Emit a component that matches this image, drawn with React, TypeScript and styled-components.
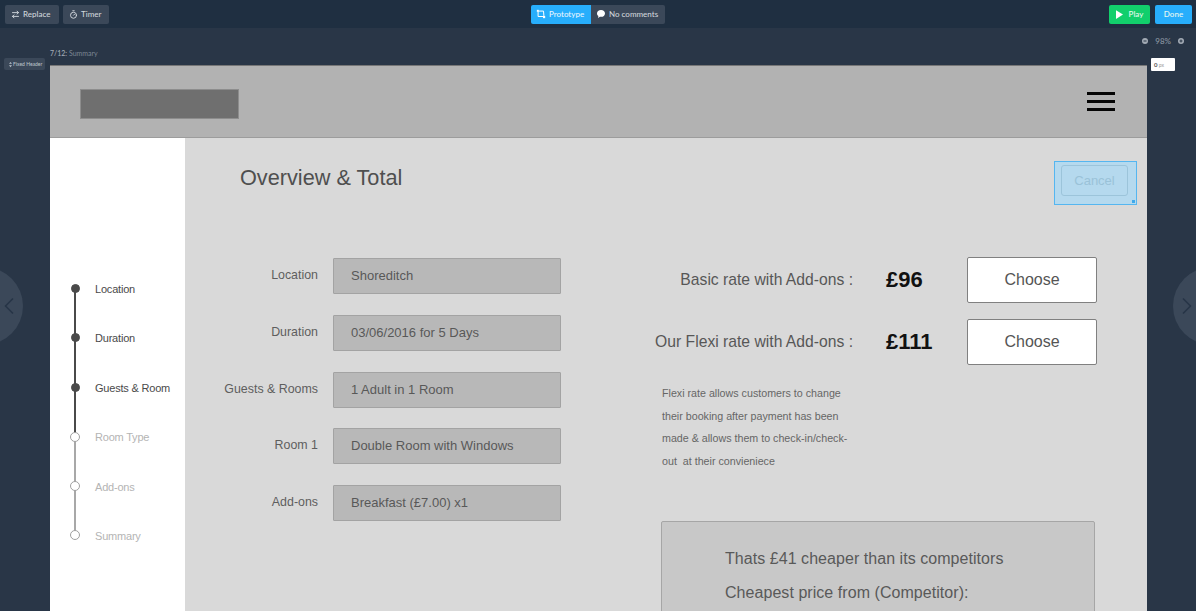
import React from 'react';
import styled, { createGlobalStyle } from 'styled-components';
import { ArrowRightLeft, ChevronLeft, ChevronRight, Timer } from 'lucide-react';

const GlobalStyle = createGlobalStyle`
  html, body {
    margin: 0;
    padding: 0;
    height: 100%;
    overflow: hidden;
    background: #293647;
  }
  * { box-sizing: border-box; }
`;

const Page = styled.div`
  position: relative;
  width: 1196px;
  height: 611px;
  overflow: hidden;
  display: flex;
  flex-direction: column;
  font-family: 'Lato', 'Liberation Sans', sans-serif;
`;

const TopBar = styled.header`
  height: 28px;
  flex: none;
  display: grid;
  grid-template-columns: 1fr auto 1fr;
  align-items: center;
  padding: 0 4px;
  background: #1f2f41;
`;

const BarGroup = styled.div<{ $end?: boolean }>`
  display: flex;
  gap: ${p => (p.$end ? 5 : 4)}px;
  padding-left: ${p => (p.$end ? 0 : 1)}px;
  justify-content: ${p => (p.$end ? 'flex-end' : 'flex-start')};
`;

const ToolButton = styled.button<{ $w: number }>`
  width: ${p => p.$w}px;
  height: 19px;
  display: flex;
  align-items: center;
  gap: 3px;
  padding: 0 0 0 6px;
  border: 0;
  border-radius: 2px;
  background: #3b4859;
  color: #cfd4da;
  font: 500 8px 'Lato', sans-serif;
  white-space: nowrap;
`;

const Segments = styled.div`
  display: flex;
  border-radius: 2px;
  overflow: hidden;
`;

const Segment = styled.button<{ $active?: boolean; $w: number }>`
  width: ${p => p.$w}px;
  height: 19px;
  display: flex;
  align-items: center;
  gap: 3px;
  padding: 0 0 0 5px;
  border: 0;
  background: ${p => (p.$active ? '#27aefc' : '#3b4859')};
  color: ${p => (p.$active ? '#e6f5ff' : '#cfd4da')};
  font: 500 8px 'Lato', sans-serif;
  white-space: nowrap;
`;

const ActionButton = styled.button<{ $color: string; $w: number }>`
  width: ${p => p.$w}px;
  height: 19px;
  display: flex;
  align-items: center;
  justify-content: center;
  gap: 6px;
  border: 0;
  border-radius: 2px;
  background: ${p => p.$color};
  color: #e8f8f0;
  font: 500 8px 'Lato', sans-serif;
`;

const Workspace = styled.div`
  flex: 1;
  min-height: 0;
  display: grid;
  grid-template-columns: 50px 1097px 49px;
  grid-template-rows: 37px 1fr;
`;

const LeftGutter = styled.div`
  grid-row: 1 / 3;
  padding: 30px 0 0 4px;
`;

const RightGutter = styled.div`
  grid-row: 1 / 3;
  grid-column: 3;
  padding: 30px 0 0 4px;
`;

const FixedTag = styled.div`
  width: 41px;
  height: 12px;
  display: flex;
  align-items: center;
  gap: 1px;
  padding-left: 5px;
  border-radius: 2px;
  background: #3b4859;
  color: #b9c0c8;
  font: 500 5px 'Lato', sans-serif;
  white-space: nowrap;
`;

const OffsetInput = styled.div`
  width: 24px;
  height: 13px;
  padding-left: 3px;
  border-radius: 1px;
  background: #fff;
  color: #9a9a9a;
  font: 5px/13px 'Lato', sans-serif;

  b {
    color: #555;
    font-size: 6px;
  }
`;

const MetaRow = styled.div`
  grid-column: 2;
  position: relative;
  display: flex;
  justify-content: space-between;
`;

const Crumb = styled.div`
  margin-top: 21px;
  font: 7px/9px 'Lato', sans-serif;
  color: #7b8694;

  b {
    font-weight: 500;
    color: #a3abb5;
  }
`;

const ZoomControls = styled.div`
  display: flex;
  align-items: center;
  gap: 7px;
  margin: 8px -37px 0 0;
  height: 9px;
  color: #8c96a3;
  font: 500 8px 'Lato', sans-serif;
`;

const Stage = styled.main`
  grid-column: 2;
  min-height: 0;
  overflow: hidden;
  display: flex;
  flex-direction: column;
  font-family: 'Liberation Sans', Arial, sans-serif;
`;

const SiteHeader = styled.div`
  height: 73px;
  flex: none;
  display: flex;
  align-items: center;
  justify-content: space-between;
  padding: 0 32px 0 30px;
  background: #b2b2b2;
  border-top: 1px solid #777;
  border-bottom: 1px solid #9c9c9c;
`;

const Logo = styled.div`
  width: 159px;
  height: 30px;
  margin-top: 4px;
  background: #6f6f6f;
  border: 1px solid #8d8d8d;
`;

const Burger = styled.div`
  width: 28px;
  display: flex;
  flex-direction: column;
  gap: 5.3px;

  i {
    display: block;
    height: 3px;
    background: #050505;
  }
`;

const Columns = styled.div`
  flex: 1;
  min-height: 0;
  display: flex;
`;

const Sidebar = styled.aside`
  width: 135px;
  flex: none;
  padding-top: 146px;
  background: #fff;
`;

const Step = styled.div<{ $done: boolean; $last?: boolean }>`
  position: relative;
  height: 49.4px;
  display: flex;
  align-items: flex-start;
  padding-left: 45px;
  color: ${p => (p.$done ? '#4a4a4a' : '#b4b4b4')};
  font-size: 11px;
  letter-spacing: -0.2px;
  line-height: 10px;

  &::before {
    content: '';
    display: ${p => (p.$last ? 'none' : 'block')};
    position: absolute;
    left: 24px;
    top: 4px;
    width: 2px;
    height: 50px;
    background: ${p => (p.$done ? '#4a4a4a' : '#a8a8a8')};
  }
`;

const StepDot = styled.span<{ $done: boolean }>`
  position: absolute;
  z-index: 1;
  left: ${p => (p.$done ? 20.5 : 20)}px;
  top: ${p => (p.$done ? 0 : -0.5)}px;
  width: ${p => (p.$done ? 9 : 10)}px;
  height: ${p => (p.$done ? 9 : 10)}px;
  border-radius: 50%;
  background: ${p => (p.$done ? '#4a4a4a' : '#fff')};
  border: ${p => (p.$done ? '1px solid #4a4a4a' : '1.5px solid #a0a0a0')};
`;

const Content = styled.section`
  position: relative;
  flex: 1;
  min-width: 0;
  padding-top: 24px;
  background: #d9d9d9;
`;

const TitleRow = styled.div`
  height: 43px;
  padding-left: 55px;
  display: flex;
  align-items: center;
`;

const Title = styled.h1`
  margin: 0 0 12px;
  font-size: 21.7px;
  font-weight: 400;
  color: #4f4f4f;
`;

const CancelSelection = styled.div`
  position: absolute;
  top: 23px;
  right: 10px;
  width: 83px;
  height: 44px;
  padding: 3px 0 0 6px;
  background: #b5d9ee;
  border: 1.5px solid #55b6f0;

  &::after {
    content: '';
    position: absolute;
    right: 1px;
    bottom: 1px;
    width: 3px;
    height: 3px;
    background: #3fa9ea;
  }
`;

const CancelButton = styled.div`
  width: 67px;
  height: 31px;
  border: 1px solid #9cc4da;
  border-radius: 3px;
  color: #9ac2d8;
  font-size: 13px;
  line-height: 29px;
  text-align: center;
`;

const Body = styled.div`
  display: grid;
  grid-template-columns: 376px 1fr;
  margin-top: 52px;
  padding-right: 50px;
`;

const Form = styled.div`
  padding-top: 1px;
  display: flex;
  flex-direction: column;
  gap: 20.75px;
`;

const FormRow = styled.div`
  display: flex;
  align-items: center;
  gap: 15px;
`;

const FormLabel = styled.div`
  width: 133px;
  margin-top: -2px;
  text-align: right;
  color: #5e5e5e;
  font-size: 12.4px;
  white-space: nowrap;
`;

const Field = styled.div`
  width: 228px;
  height: 36px;
  padding-left: 17px;
  border: 1px solid #a3a3a3;
  border-radius: 1px;
  background: #b8b8b8;
  color: #585858;
  font-size: 13px;
  line-height: 34px;
`;

const Rates = styled.div`
  display: flex;
  flex-direction: column;
`;

const RateRow = styled.div`
  display: flex;
  align-items: center;
  justify-content: flex-end;
  margin-bottom: 16px;
`;

const RateLabel = styled.div`
  color: #575757;
  font-size: 15.7px;
  white-space: nowrap;
`;

const RatePrice = styled.div`
  width: 81px;
  margin-left: 33px;
  color: #111;
  font-size: 22px;
  font-weight: 700;
`;

const ChooseButton = styled.button`
  width: 130px;
  height: 46px;
  border: 1px solid #808080;
  border-radius: 2px;
  background: #fff;
  color: #555;
  font: 16px 'Liberation Sans', Arial, sans-serif;
`;

const Note = styled.p`
  width: 190px;
  margin: 1px 0 0 101px;
  color: #666;
  font-size: 10.7px;
  line-height: 22.7px;
  white-space: pre-wrap;
`;

const Compare = styled.div`
  width: 434px;
  height: 120px;
  margin: 48px 0 0 100px;
  padding: 26.5px 0 0 63px;
  border: 1px solid #a6a6a6;
  border-radius: 2px;
  background: #c8c8c8;
  color: #595959;
  font-size: 16px;
  letter-spacing: 0.05px;

  p {
    margin: 0 0 13px;
    line-height: 21px;
  }
`;

const NavCircle = styled.div<{ $side: 'left' | 'right' }>`
  position: absolute;
  top: 267px;
  ${p => (p.$side === 'left' ? 'left: -55px;' : 'right: -55px;')}
  width: 78px;
  height: 78px;
  display: flex;
  align-items: center;
  justify-content: ${p => (p.$side === 'left' ? 'flex-end' : 'flex-start')};
  border-radius: 50%;
  background: #3b4859;
  color: #273547;
`;

const steps = [
  { label: 'Location', done: true },
  { label: 'Duration', done: true },
  { label: 'Guests & Room', done: true },
  { label: 'Room Type', done: false },
  { label: 'Add-ons', done: false },
  { label: 'Summary', done: false },
];

const fields = [
  { label: 'Location', value: 'Shoreditch' },
  { label: 'Duration', value: '03/06/2016 for 5 Days' },
  { label: 'Guests & Rooms', value: '1 Adult in 1 Room' },
  { label: 'Room 1', value: 'Double Room with Windows' },
  { label: 'Add-ons', value: 'Breakfast (£7.00) x1' },
];

const rates = [
  { label: 'Basic rate with Add-ons :', price: '£96' },
  { label: 'Our Flexi rate with Add-ons :', price: '£111' },
];

const PrototypeIcon = () => (
  <svg width="10" height="10" viewBox="0 0 12 12" fill="none" stroke="#fff" strokeWidth="1.2">
    <path d="M3 2.500h6l.5 6M2.500 3v6h6" />
    <rect x="1" y="1" width="2.400" height="2.400" fill="#fff" stroke="none" />
    <rect x="8.400" y="8.400" width="2.600" height="2.600" fill="#fff" stroke="none" />
  </svg>
);

const BubbleIcon = () => (
  <svg width="10" height="10" viewBox="0 0 10 10" fill="#fff">
    <path d="M5 1c2.400 0 4 1.400 4 3.400S7.400 7.800 5 7.800c-.4 0-.8 0-1.100-.1L2 9l.4-2C1.500 6.400 1 5.500 1 4.400 1 2.400 2.600 1 5 1z" />
  </svg>
);

const PlayIcon = () => (
  <svg width="7" height="9" viewBox="0 0 8 10" fill="#fff">
    <path d="M0 0l8 5-8 5z" />
  </svg>
);

const ZoomIcon = ({ plus }: { plus?: boolean }) => (
  <svg width="6" height="6" viewBox="0 0 6 6">
    <circle cx="3" cy="3" r="3" fill="#a3abb5" />
    <path d={plus ? 'M1.500 3h3M3 1.500v3' : 'M1.500 3h3'} stroke="#293647" strokeWidth="1" />
  </svg>
);

const MoveIcon = () => (
  <svg width="3" height="7" viewBox="0 0 4 7" fill="#b9c0c8">
    <path d="M2 0l2 2.500H0zM2 7L0 4.500h4z" />
  </svg>
);

export default function App() {
  return (
    <Page>
      <GlobalStyle />
      <TopBar>
        <BarGroup>
          <ToolButton $w={54}>
            <ArrowRightLeft size={9} strokeWidth={2.6} />
            Replace
          </ToolButton>
          <ToolButton $w={46}>
            <Timer size={9} strokeWidth={2.6} />
            Timer
          </ToolButton>
        </BarGroup>
        <Segments>
          <Segment $active $w={60}>
            <PrototypeIcon />
            Prototype
          </Segment>
          <Segment $w={74}>
            <BubbleIcon />
            No comments
          </Segment>
        </Segments>
        <BarGroup $end>
          <ActionButton $color="#12cf6c" $w={41}>
            <PlayIcon />
            Play
          </ActionButton>
          <ActionButton $color="#27aefc" $w={37}>
            Done
          </ActionButton>
        </BarGroup>
      </TopBar>

      <Workspace>
        <LeftGutter>
          <FixedTag>
            <MoveIcon />
            Fixed Header
          </FixedTag>
        </LeftGutter>

        <MetaRow>
          <Crumb>
            <b>7/12:</b> Summary
          </Crumb>
          <ZoomControls>
            <ZoomIcon />
            98%
            <ZoomIcon plus />
          </ZoomControls>
        </MetaRow>

        <RightGutter>
          <OffsetInput>
            <b>0</b> px
          </OffsetInput>
        </RightGutter>

        <Stage>
          <SiteHeader>
            <Logo />
            <Burger>
              <i />
              <i />
              <i />
            </Burger>
          </SiteHeader>
          <Columns>
            <Sidebar>
              {steps.map((step, i) => (
                <Step key={step.label} $done={step.done} $last={i === steps.length - 1}>
                  <StepDot $done={step.done} />
                  {step.label}
                </Step>
              ))}
            </Sidebar>
            <Content>
              <TitleRow>
                <Title>Overview &amp; Total</Title>
              </TitleRow>
              <CancelSelection>
                <CancelButton>Cancel</CancelButton>
              </CancelSelection>
              <Body>
                <Form>
                  {fields.map(field => (
                    <FormRow key={field.label}>
                      <FormLabel>{field.label}</FormLabel>
                      <Field>{field.value}</Field>
                    </FormRow>
                  ))}
                </Form>
                <Rates>
                  {rates.map(rate => (
                    <RateRow key={rate.label}>
                      <RateLabel>{rate.label}</RateLabel>
                      <RatePrice>{rate.price}</RatePrice>
                      <ChooseButton>Choose</ChooseButton>
                    </RateRow>
                  ))}
                  <Note>
                    Flexi rate allows customers to change their booking after payment has been made &amp; allows them to check-in/check-out{'  '}at their convieniece
                  </Note>
                  <Compare>
                    <p>Thats £41 cheaper than its competitors</p>
                    <p>Cheapest price from (Competitor):</p>
                  </Compare>
                </Rates>
              </Body>
            </Content>
          </Columns>
        </Stage>
      </Workspace>

      <NavCircle $side="left">
        <ChevronLeft size={28} strokeWidth={1.5} />
      </NavCircle>
      <NavCircle $side="right">
        <ChevronRight size={28} strokeWidth={1.5} />
      </NavCircle>
    </Page>
  );
}
